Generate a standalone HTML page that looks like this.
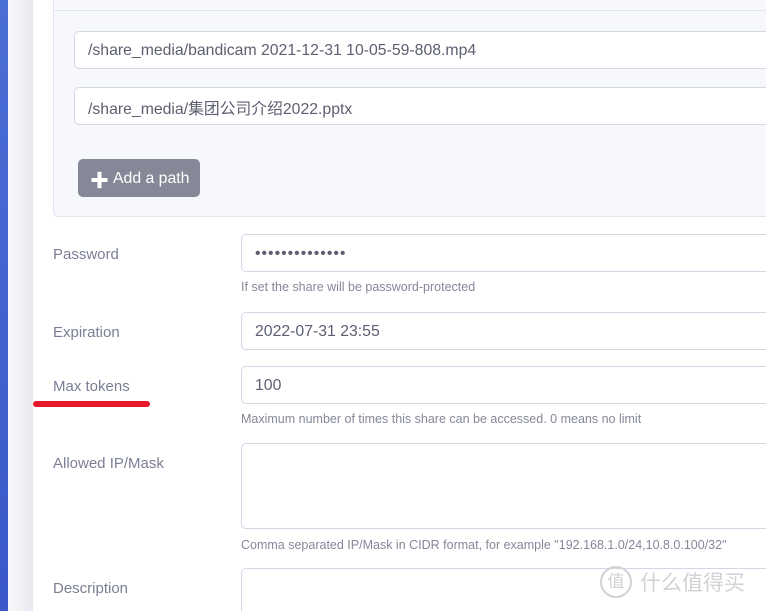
<!DOCTYPE html>
<html><head><meta charset="utf-8"><style>
*{box-sizing:border-box;margin:0;padding:0}
html,body{width:766px;height:611px;overflow:hidden}
body{background:#f3f4f8;font-family:"Liberation Sans","Noto Sans CJK SC",sans-serif;position:relative}
.blue{position:absolute;left:0;top:0;width:8px;height:611px;background:linear-gradient(#4a6fd6,#3a58c8)}
.gray{position:absolute;left:8px;top:0;width:25px;height:611px;background:linear-gradient(90deg,#f6f7fb,#e9eaf0)}
.card{position:absolute;left:33px;top:0;width:733px;height:611px;background:#fff}
.panel{position:absolute;left:53px;top:-5px;width:720px;height:222px;background:#f7f8fc;border:1px solid #e2e4ee;border-radius:5px}
.pline{position:absolute;left:54px;top:10px;width:720px;height:1px;background:#e2e4ee}
.inp{position:absolute;background:#fff;border:1px solid #d4d6e6;border-radius:5px;font-size:15.8px;color:#5c5f70;padding-left:13px;padding-top:2px;display:flex;align-items:center;width:700px}
.lab{position:absolute;left:53px;font-size:15px;color:#7b7f96}
.help{position:absolute;left:241px;font-size:12.5px;color:#858899}
.btn{position:absolute;left:78px;top:159px;width:122px;height:38px;background:#868797;border-radius:5px;color:#fff;font-size:15.8px;display:flex;align-items:center;padding-left:12px;padding-top:2px}
</style></head><body>
<div class="blue"></div><div class="gray"></div><div class="card"></div>
<div class="panel"></div><div class="pline"></div>
<div class="inp" style="left:74px;top:31px;height:38px">/share_media/bandicam 2021-12-31 10-05-59-808.mp4</div>
<div class="inp" style="left:74px;top:87px;height:38px">/share_media/集团公司介绍2022.pptx</div>
<div class="btn"><b style="font-size:19px;margin-right:4px">✚</b>Add a path</div>
<div class="lab" style="top:246px">Password</div>
<div class="inp" style="left:241px;top:234px;height:38px;letter-spacing:1px">••••••••••••••</div>
<div class="help" style="top:280px">If set the share will be password-protected</div>
<div class="lab" style="top:324px">Expiration</div>
<div class="inp" style="left:241px;top:312px;height:38px">2022-07-31 23:55</div>
<div class="lab" style="top:378px">Max tokens</div>
<div style="position:absolute;left:33px;top:401px;width:117px;height:6px;background:#e8162a;border-radius:3px"></div>
<div class="inp" style="left:241px;top:366px;height:38px">100</div>
<div class="help" style="top:412px">Maximum number of times this share can be accessed. 0 means no limit</div>
<div class="lab" style="top:455px">Allowed IP/Mask</div>
<div class="inp" style="left:241px;top:443px;height:86px"></div>
<div class="help" style="top:538px">Comma separated IP/Mask in CIDR format, for example "192.168.1.0/24,10.8.0.100/32"</div>
<div class="lab" style="top:580px">Description</div>
<div class="inp" style="left:241px;top:568px;height:60px"></div>
<div style="position:absolute;left:600px;top:566px;color:#d2d2d6;font-size:21px;display:flex;align-items:center"><span style="display:inline-block;width:32px;height:32px;border:2px solid #d2d2d6;border-radius:50%;font-size:17px;text-align:center;line-height:28px;margin-right:8px">值</span>什么值得买</div>
</body></html>
